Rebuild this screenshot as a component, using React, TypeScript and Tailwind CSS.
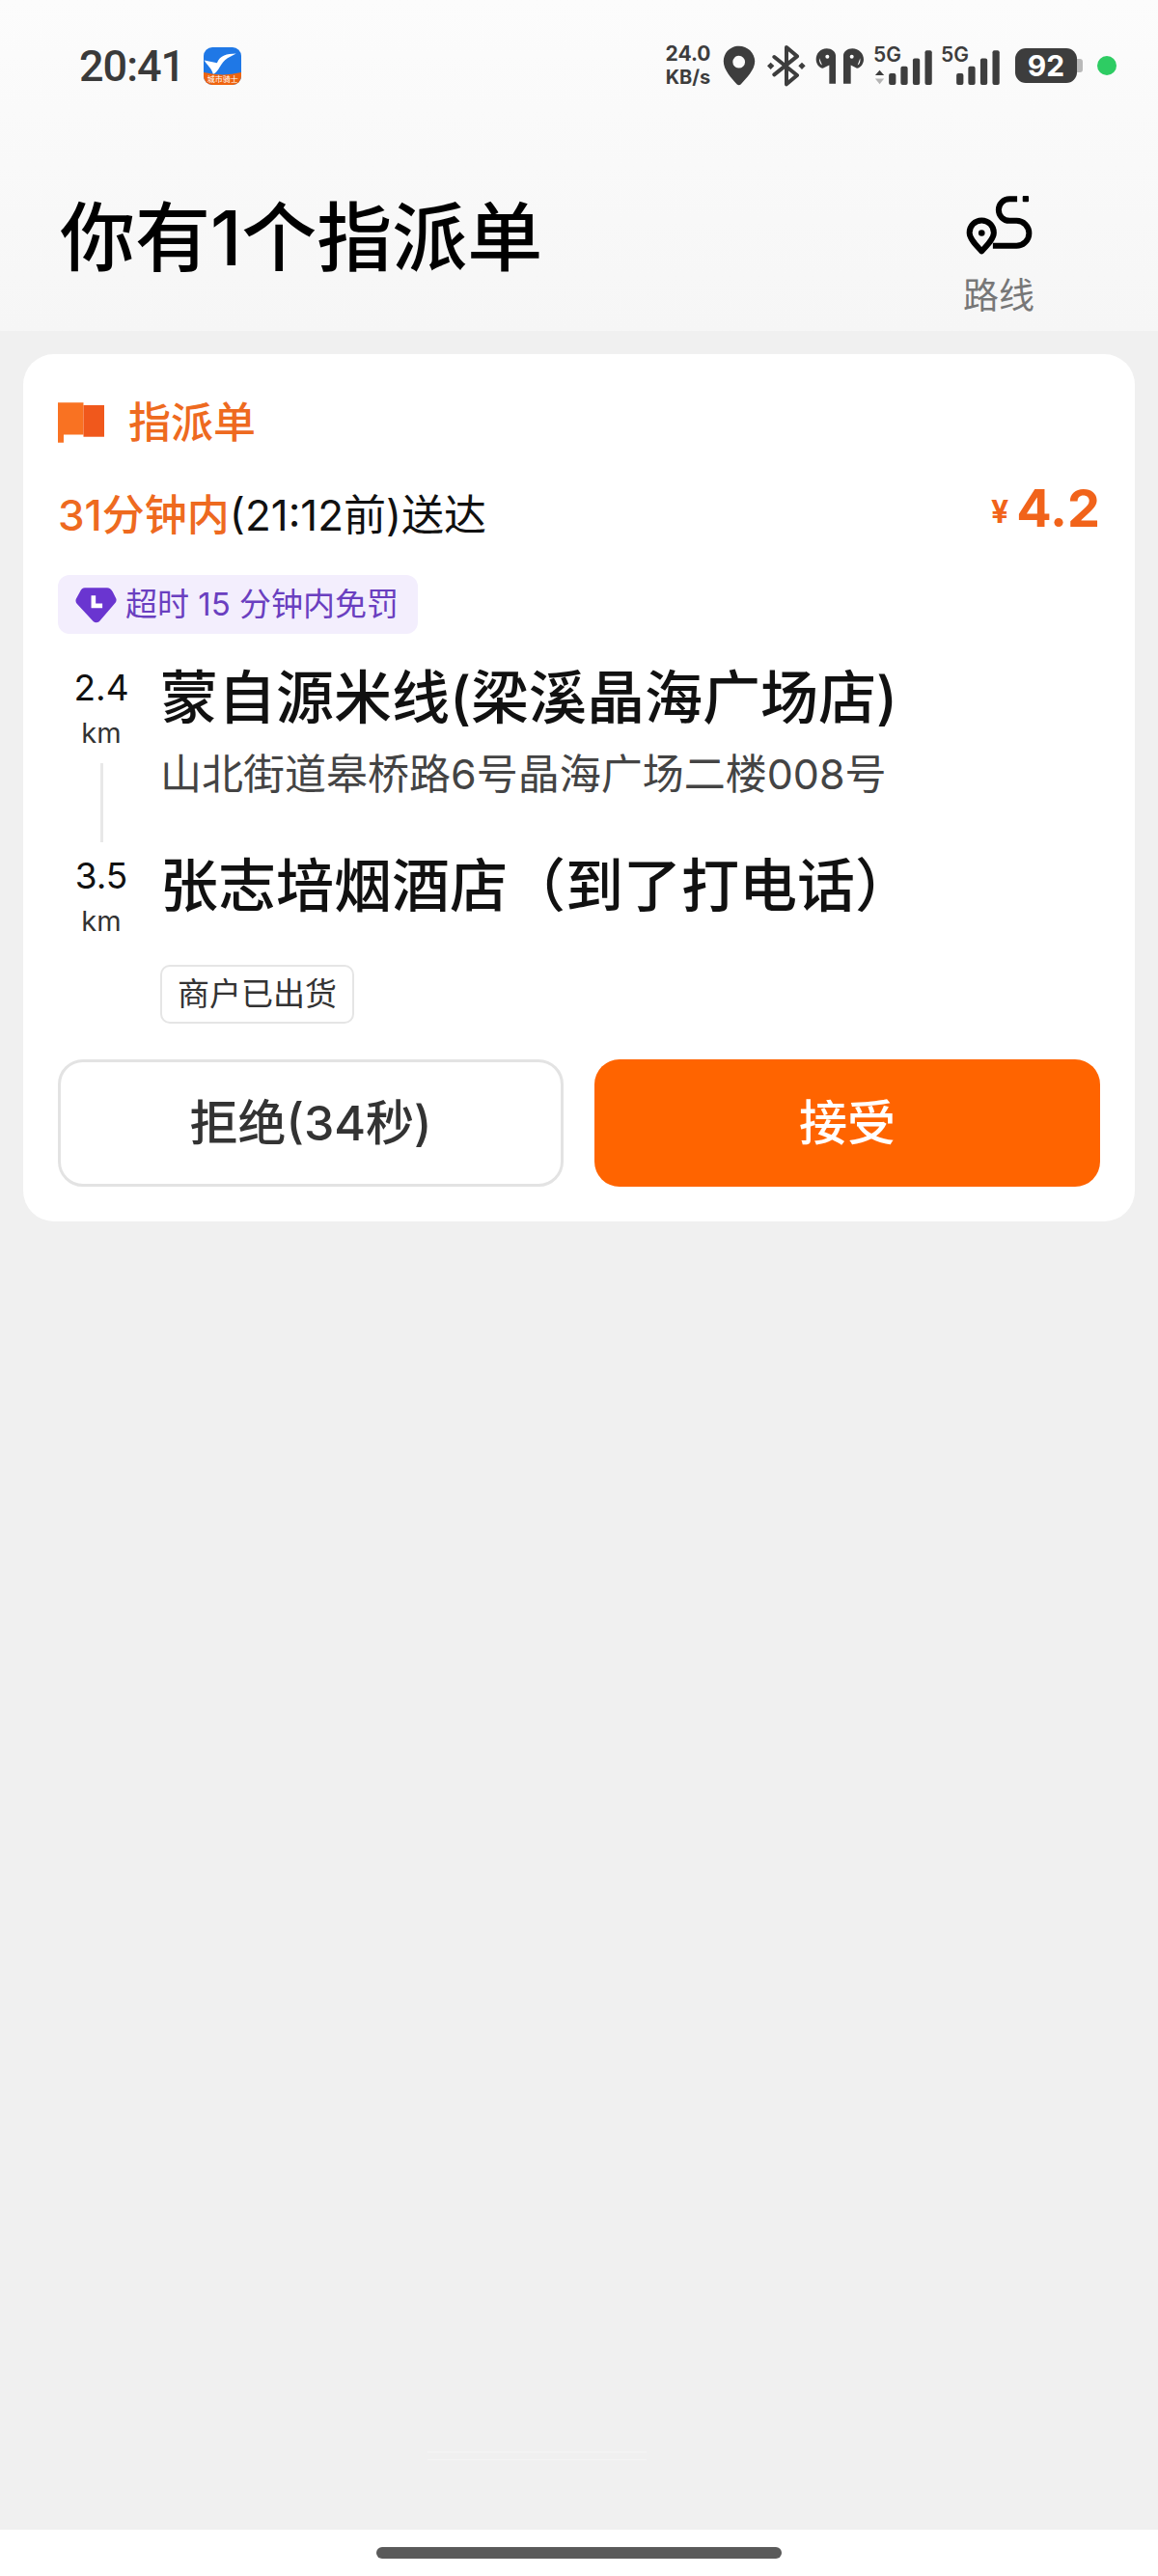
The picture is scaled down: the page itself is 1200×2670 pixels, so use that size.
const signalBars = [
  { x: 48, y: 82, h: 36 },
  { x: 85, y: 60, h: 58 },
  { x: 123, y: 35, h: 83 },
  { x: 161, y: 10, h: 108 },
]

function AppIcon() {
  return (
    <div className="relative h-[39px] w-[39px] overflow-hidden rounded-[9px] bg-[#1f78e6]">
      <svg viewBox="620 147 118 118" className="h-full w-full">
        <path d="M722 167C692 168 672 172 662 196L622 188C632 205 645 212 650 232C668 224 672 196 695 181Z" fill="#fff" />
        <path d="M620 226Q680 240 738 226V265H620Z" fill="#ef640f" />
      </svg>
      <span className="absolute bottom-0 left-0 w-full text-center text-[8px] leading-[12px] text-white">城市骑士</span>
    </div>
  )
}

function PinIcon() {
  return (
    <svg viewBox="268 78 106 132" className="ml-[13px] h-[42px] w-[34px]">
      <path
        fillRule="evenodd"
        d="M320 80C292 80 270 102 270 130C270 158 296 186 314 205Q320 210 326 205C344 186 372 158 372 130C372 102 348 80 320 80ZM320 112A20 20 0 1 1 320 152A20 20 0 1 1 320 112Z"
        fill="#3d3d3d"
      />
    </svg>
  )
}

function BluetoothIcon() {
  return (
    <svg viewBox="402 76 126 132" className="ml-[11px] h-[44px] w-[42px]">
      <path d="M427 115L498 172L465 200V85L498 113L427 170" fill="none" stroke="#3d3d3d" strokeWidth="12" strokeLinejoin="round" strokeLinecap="round" />
      <path d="M416 132L427 143L416 154L405 143Z M513 132L524 143L513 154L502 143Z" fill="#3d3d3d" />
    </svg>
  )
}

function PodsIcon() {
  return (
    <svg viewBox="555 85 150 116" className="ml-[9px] h-[39px] w-[50px]">
      <path d="M590 88C570 88 557 104 557 122C557 136 566 148 578 150L598 140V198H618V110C618 98 606 88 590 88Z" fill="#3d3d3d" />
      <path d="M670 88C690 88 705 104 705 122C705 136 696 148 684 150L665 140V198H642V110C642 98 654 88 670 88Z" fill="#3d3d3d" />
      <circle cx="592" cy="114" r="6" fill="#fff" />
      <circle cx="668" cy="114" r="6" fill="#fff" />
      <path d="M567 118Q566 134 576 140Z M694 118Q696 134 686 140Z" fill="#fff" />
    </svg>
  )
}

function SignalIcon({ arrows }: { arrows?: boolean }) {
  return (
    <div className="relative h-[39px] w-[62px]">
      <svg viewBox="0 0 186 118" className="h-full w-full">
        {arrows && (
          <g>
            <path d="M19 72L33 88H5Z" fill="#3d3d3d" />
            <path d="M19 116L33 98H5Z" fill="#b5b5b5" />
          </g>
        )}
        {signalBars.map((b) => (
          <rect key={b.x} x={b.x} y={b.y} width="22" height={b.h} rx="6" fill="#3d3d3d" />
        ))}
      </svg>
      <span className="absolute left-0 top-0 text-[21px] font-semibold leading-[16px] text-[#3d3d3d]">5G</span>
    </div>
  )
}

function RouteIcon() {
  return (
    <svg viewBox="180 90 220 200" className="h-[67px] w-[73px]">
      <path
        d="M235 175A38 38 0 0 0 197 213C197 232 220 255 235 271C250 255 273 232 273 213A38 38 0 0 0 235 175Z"
        fill="none"
        stroke="#000"
        strokeWidth="18"
        strokeLinejoin="round"
      />
      <circle cx="235" cy="214" r="10" fill="#000" />
      <path
        d="M346 108H322A34 34 0 0 0 322 176H344A39 39 0 0 1 344 254H270"
        fill="none"
        stroke="#000"
        strokeWidth="18"
      />
      <rect x="363" y="98" width="19" height="19" rx="3" fill="#000" />
    </svg>
  )
}

function StatusBar() {
  return (
    <div className="flex h-[136px] items-center pl-[82px] pr-[43px]">
      <span className="text-[45px] font-medium leading-none tracking-[-1px] text-[#3a3a3a] [font-family:Roboto,sans-serif]">20:41</span>
      <div className="ml-[20px]">
        <AppIcon />
      </div>
      <div className="ml-auto flex items-center">
        <div className="flex w-[46px] flex-col items-center text-[#3d3d3d]">
          <span className="text-[21px] font-bold leading-[24px]">24.0</span>
          <span className="text-[20px] font-bold leading-[24px]">KB/s</span>
        </div>
        <PinIcon />
        <BluetoothIcon />
        <PodsIcon />
        <div className="ml-[10px]">
          <SignalIcon arrows />
        </div>
        <div className="ml-[8px]">
          <SignalIcon />
        </div>
        <div className="ml-[15px] flex items-center">
          <div className="flex h-[36px] w-[64px] items-center justify-center rounded-[11px] bg-[#3d3d3d] text-[30px] font-bold text-white">
            92
          </div>
          <div className="h-[14px] w-[6px] rounded-r-[3px] bg-[#b9b9b9]" />
        </div>
        <div className="ml-[15px] h-[20px] w-[20px] rounded-full bg-[#2ecc63]" />
      </div>
    </div>
  )
}

function Distance({ value }: { value: string }) {
  return (
    <div className="flex flex-col items-center">
      <span className="text-[37px] leading-[50px] text-[#111]">{value}</span>
      <span className="mt-[2px] text-[29px] leading-[40px] text-[#333]">km</span>
    </div>
  )
}

export default function App() {
  return (
    <div className="flex min-h-[2670px] w-[1200px] flex-col bg-[#f0f0f0] [font-family:Inter,'Noto_Sans_CJK_SC',sans-serif]">
      {/* Header */}
      <header className="h-[343px] bg-gradient-to-b from-[#fcfcfc] to-[#f6f6f6]">
        <StatusBar />
        <div className="flex items-start justify-between pl-[62px] pr-[128px]">
          <h1 className="mt-[66px] text-[78px] font-medium leading-[90px] text-black">你有1个指派单</h1>
          <div className="mt-[64px] flex w-[74px] flex-col items-center">
            <RouteIcon />
            <span className="mt-[15px] whitespace-nowrap text-[37px] leading-[50px] text-[#777]">路线</span>
          </div>
        </div>
      </header>

      <main className="relative flex-1 px-[24px] pt-[24px]">
        {/* Order card */}
        <section className="rounded-[32px] bg-white px-[36px] pb-[36px] pt-[41px]">
          <div className="flex h-[60px] items-center">
            <svg viewBox="120 145 145 125" className="h-[42px] w-[48px]">
              <path d="M120 145H200V245H138V270H120Z" fill="#f97222" />
              <path d="M200 153H265V252H200Z" fill="#f0581c" />
            </svg>
            <span className="ml-[25px] text-[44px] font-medium leading-[60px] text-[#ee6a1f]">指派单</span>
          </div>

          <div className="mt-[36px] flex h-[60px] items-center justify-between">
            <p className="text-[44px] leading-[60px] text-[#111]">
              <span className="font-medium text-[#ee6a1f]">31分钟内</span>(21:12前)送达
            </p>
            <p className="mb-[14px] flex items-center font-bold text-[#f1631a]">
              <span className="mr-[8px] mt-[8px] text-[32px] leading-none">¥</span>
              <span className="text-[54px] leading-none">4.2</span>
            </p>
          </div>

          <div className="mt-[32px] flex h-[61px] w-[373px] items-center rounded-[12px] bg-[#f3eefd] pl-[18px]">
            <svg viewBox="175 715 130 113" className="h-[38px] w-[43px]">
              <path
                d="M205 718H275Q285 718 292 730L303 752Q306 760 298 768L250 824Q240 830 232 824L180 768Q174 760 178 752L190 730Q195 718 205 718Z"
                fill="#6a35d0"
              />
              <path d="M232 742V774H260" fill="none" stroke="#fff" strokeWidth="14" />
            </svg>
            <span className="ml-[9px] text-[33px] text-[#6a3fc0]">超时 15 分钟内免罚</span>
          </div>

          {/* Route stops */}
          <div className="mt-[26px] flex">
            <div className="flex w-[90px] flex-col items-center pt-[5px]">
              <Distance value="2.4" />
              <div className="mt-[11px] h-[82px] w-[3px] bg-[#e8e8e8]" />
              <div className="mt-[10px]">
                <Distance value="3.5" />
              </div>
            </div>
            <div className="ml-[16px] flex-1">
              <h2 className="text-[60px] font-medium leading-[80px] text-[#111]">蒙自源米线(梁溪晶海广场店)</h2>
              <p className="mt-[9px] text-[43px] leading-[60px] text-[#444]">山北街道皋桥路6号晶海广场二楼008号</p>
              <h2 className="mt-[46px] text-[60px] font-medium leading-[80px] text-[#111]">张志培烟酒店（到了打电话）</h2>
              <span className="mt-[42px] flex h-[61px] w-[201px] items-center justify-center rounded-[10px] border-2 border-[#e5e5e5] text-[33px] text-[#333]">
                商户已出货
              </span>
            </div>
          </div>

          {/* Actions */}
          <div className="mt-[37px] grid grid-cols-2 gap-[32px]">
            <button className="h-[132px] rounded-[26px] border-[3px] border-[#e3e3e3] text-[50px] font-medium text-[#333]">
              拒绝(34秒)
            </button>
            <button className="h-[132px] rounded-[26px] bg-[#ff6400] text-[50px] font-medium text-white">接受</button>
          </div>
        </section>
        <div className="absolute left-[443px] top-[2198px] h-px w-[227px] bg-[#f5f5f5]" />
        <div className="absolute left-[443px] top-[2206px] h-px w-[227px] bg-[#f5f5f5]" />
      </main>

      {/* Nav bar */}
      <div className="flex h-[48px] items-start justify-center bg-white pt-[18px]">
        <div className="h-[12px] w-[420px] rounded-full bg-[#5a5a5a]" />
      </div>
    </div>
  )
}
